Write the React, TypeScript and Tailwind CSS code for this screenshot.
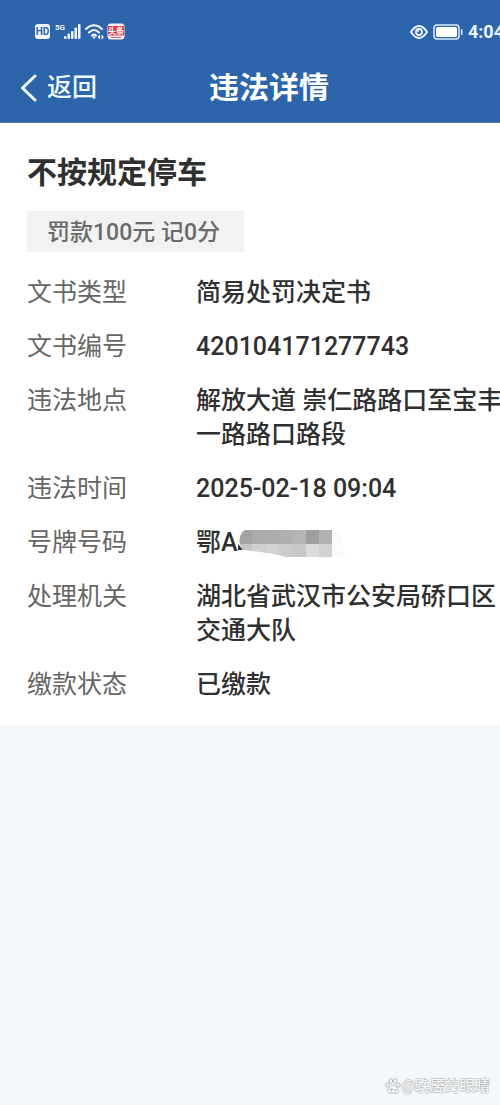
import type { ReactNode } from 'react'

type Row = { label: string; value: ReactNode }

const rows: Row[] = [
  { label: '文书类型', value: '简易处罚决定书' },
  { label: '文书编号', value: '420104171277743' },
  { label: '违法地点', value: <>解放大道 崇仁路路口至宝丰<br />一路路口路段</> },
  { label: '违法时间', value: '2025-02-18 09:04' },
  { label: '号牌号码', value: <span className="flex items-center">鄂A<PlateMask /></span> },
  { label: '处理机关', value: <>湖北省武汉市公安局硚口区<br />交通大队</> },
  { label: '缴款状态', value: '已缴款' },
]

const maskTop = ['#a3a3a3', '#ababab', '#adadad', '#b0b0b0', '#b5b5b5', '#9f9f9f', '#b2b2b2']
const maskBottom = ['#c4c4c4', '#cfcfcf', '#d3d3d3', '#cccccc', '#c8c8c8', '#dcdcdc', '#d2d2d2']

function PlateMask() {
  return (
    <svg width="108" height="34" viewBox="0 0 108 34" aria-hidden="true">
      <defs>
        <clipPath id="plate">
          <path d="M7 4H94V31H47C35 27 20 26 5 24C0 20 0 8 7 4Z" />
        </clipPath>
      </defs>
      <path d="M94 5H101L107 30H94Z" fill="#fafafa" />
      <path d="M0 18L5 24H0Z" fill="#2b2b2b" />
      <g clipPath="url(#plate)" shapeRendering="crispEdges">
        {maskTop.map((c, i) => <rect key={i} x={1 + i * 13.3} y="4" width="13.5" height="14" fill={c} />)}
        {maskBottom.map((c, i) => <rect key={i} x={1 + i * 13.3} y="18" width="13.5" height="14" fill={c} />)}
      </g>
    </svg>
  )
}

function SignalIcons() {
  return (
    <svg width="92" height="22" viewBox="0 0 92 22" className="shrink-0" aria-hidden="true">
      <rect x="0" y="4" width="15" height="15" rx="3" fill="#f2f8ff" />
      <text x="7.5" y="15.4" textAnchor="middle" fontSize="10" fontWeight="700" fill="#2c65aa">HD</text>
      <text x="20" y="9.5" fontSize="8" fontWeight="700" fill="#f2f8ff">5G</text>
      <g fill="#f2f8ff">
        <rect x="29" y="16" width="2.5" height="3" rx="1" />
        <rect x="32.5" y="13.5" width="2.5" height="5.5" rx="1" />
        <rect x="36" y="11" width="2.5" height="8" rx="1" />
        <rect x="39.5" y="7.5" width="2.5" height="11.5" rx="1" />
        <rect x="43" y="4" width="2.5" height="15" rx="1" />
      </g>
      <g fill="none" stroke="#f2f8ff" strokeWidth="2" strokeLinecap="round">
        <path d="M51 9Q59 1.500 67 9" />
        <path d="M54 12.500Q59 7.500 64 12.500" />
        <path d="M57 15.500Q59 13.700 61 15.500" />
      </g>
      <path d="M57 16.500L61 16.500L59 19Z" fill="#f2f8ff" />
      <path d="M65 14.500V19.500L62.500 17ZM66.500 14.500V19.500L69 17Z" fill="#f2f8ff" />
      <rect x="72.500" y="3.500" width="17" height="16" rx="3.500" fill="#fbeef0" />
      <rect x="73" y="6" width="16" height="9.500" fill="#dc3b4b" />
      <text x="81" y="14" textAnchor="middle" fontSize="8" fontWeight="700" fill="#fff">头条</text>
      <rect x="76" y="17" width="10" height="1" fill="#dc6b76" />
    </svg>
  )
}

function EyeIcon() {
  return (
    <svg width="18" height="16" viewBox="0 0 18 16" fill="none" stroke="#eef7ff" aria-hidden="true">
      <path d="M1 8C4 3.300 6.500 2 9 2S14 3.300 17 8C14 12.700 11.500 14 9 14S4 12.700 1 8Z" strokeWidth="2" strokeLinejoin="round" />
      <circle cx="9" cy="8" r="3" strokeWidth="1.800" />
      <circle cx="8" cy="7" r="1" fill="#eef7ff" stroke="none" />
    </svg>
  )
}

function BatteryIcon() {
  return (
    <svg width="30" height="16" viewBox="0 0 30 16" aria-hidden="true">
      <rect x="1" y="1" width="25" height="14" rx="3" fill="none" stroke="#dcecff" strokeWidth="1.500" />
      <rect x="3" y="3" width="21" height="10" rx="1.500" fill="#fff" />
      <rect x="28" y="5" width="1.500" height="6" rx=".7" fill="#dcecff" />
    </svg>
  )
}

function PawIcon() {
  return (
    <svg width="16" height="16" viewBox="0 0 16 16" fill="#fff" stroke="#aaaeb1" strokeWidth=".9" aria-hidden="true">
      <ellipse cx="2.500" cy="7" rx="1.700" ry="2.200" />
      <ellipse cx="5.800" cy="3" rx="1.700" ry="2.300" />
      <ellipse cx="10.200" cy="3" rx="1.700" ry="2.300" />
      <ellipse cx="13.500" cy="7" rx="1.700" ry="2.200" />
      <path d="M8 7C5.500 7 5 9.500 3.300 10.800C1.500 12.500 2.500 15.300 5 15.200C6.500 15.100 7 14.800 8 14.800S9.500 15.100 11 15.200C13.500 15.300 14.500 12.500 12.700 10.800C11 9.500 10.500 7 8 7Z" />
      <path d="M7 9.500V13H5.500Q4.700 12 5.500 11H7M9 11V12.500Q9.500 13 11 12.800V11" fill="none" />
    </svg>
  )
}

export default function App() {
  return (
    <div className="flex min-h-screen flex-col overflow-hidden bg-[#f4f8fa] font-[Roboto,'Noto_Sans_CJK_SC',sans-serif] text-[#303030]">
      <header className="border-b border-[#4c74a3] bg-[#2c65aa] text-white">
        <div className="flex h-[50px] items-end justify-between pb-2 pl-[35px]">
          <SignalIcons />
          <div className="-mr-1 flex h-5 items-center gap-[5px] whitespace-nowrap">
            <EyeIcon />
            <BatteryIcon />
            <span className="text-lg font-bold text-[#eef7ff]">4:04</span>
          </div>
        </div>
        <div className="-mr-[18px] grid h-[72px] grid-cols-[1fr_auto_1fr] items-center pt-1 pl-5">
          <button type="button" className="flex items-center gap-2.5 text-[25px] font-medium text-[#eefaff]">
            <svg width="17" height="28" viewBox="0 0 17 28" fill="none" stroke="currentColor" strokeWidth="3" strokeLinecap="round" strokeLinejoin="round" aria-hidden="true">
              <path d="M15 2L2.500 14L15 26" />
            </svg>
            返回
          </button>
          <h1 className="text-3xl font-bold">违法详情</h1>
        </div>
      </header>

      <main className="bg-white px-[27px] pt-[26px] pb-[23px]">
        <h2 className="text-3xl leading-12 font-bold">不按规定停车</h2>
        <p className="mt-3.5 inline-block bg-[#f2f2f2] pt-0.5 pr-6 pl-5 text-[23px] leading-[39px] font-medium text-[#6a6a6a]">罚款100元 记0分</p>
        <dl className="mt-6 flex flex-col gap-5 text-[25px] leading-[34px] whitespace-nowrap">
          {rows.map(r => (
            <div key={r.label} className="flex">
              <dt className="w-[169px] shrink-0 text-[#666]">{r.label}</dt>
              <dd className="font-medium">{r.value}</dd>
            </div>
          ))}
        </dl>
      </main>

      <footer className="mt-auto flex items-center justify-end gap-px pr-2.5 pb-2 text-[15px] text-white">
        <PawIcon />
        <span className="[-webkit-text-stroke:1px_#aaaeb1] [paint-order:stroke_fill]">@晚靥的眼睛</span>
      </footer>
    </div>
  )
}
